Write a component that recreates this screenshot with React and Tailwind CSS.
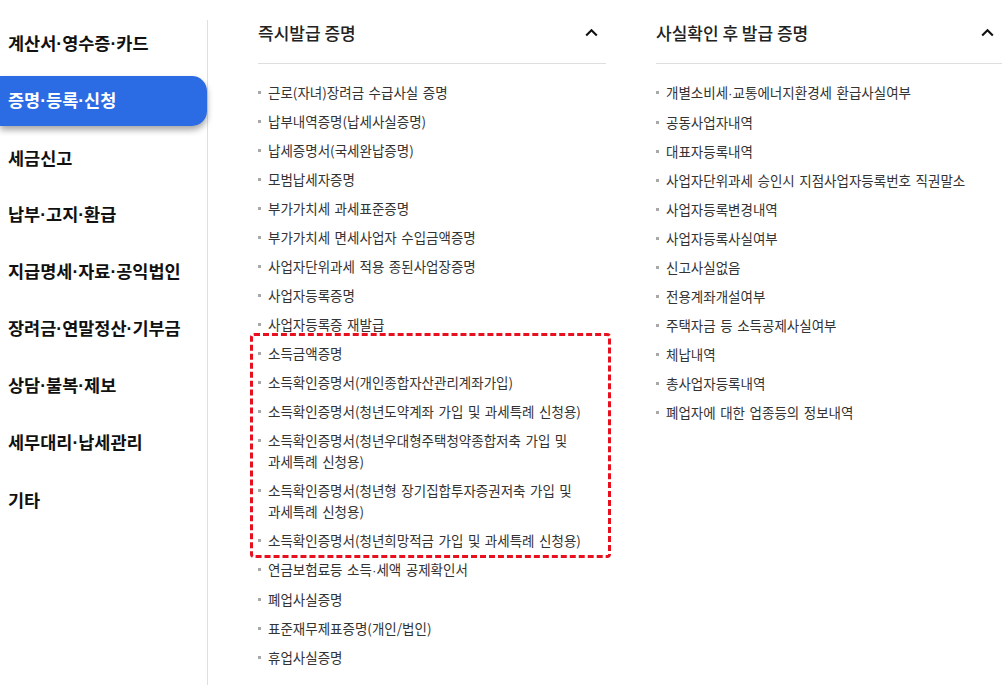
import React from "react";

const menu = [
  "계산서·영수증·카드",
  "증명·등록·신청",
  "세금신고",
  "납부·고지·환급",
  "지급명세·자료·공익법인",
  "장려금·연말정산·기부금",
  "상담·불복·제보",
  "세무대리·납세관리",
  "기타",
];

const instantTop = [
  "근로(자녀)장려금 수급사실 증명",
  "납부내역증명(납세사실증명)",
  "납세증명서(국세완납증명)",
  "모범납세자증명",
  "부가가치세 과세표준증명",
  "부가가치세 면세사업자 수입금액증명",
  "사업자단위과세 적용 종된사업장증명",
  "사업자등록증명",
  "사업자등록증 재발급",
];

// items inside the red dashed highlight
const instantMarked = [
  "소득금액증명",
  "소득확인증명서(개인종합자산관리계좌가입)",
  "소득확인증명서(청년도약계좌 가입 및 과세특례 신청용)",
  "소득확인증명서(청년우대형주택청약종합저축 가입 및 과세특례 신청용)",
  "소득확인증명서(청년형 장기집합투자증권저축 가입 및 과세특례 신청용)",
  "소득확인증명서(청년희망적금 가입 및 과세특례 신청용)",
];

const instantBottom = [
  "연금보험료등 소득·세액 공제확인서",
  "폐업사실증명",
  "표준재무제표증명(개인/법인)",
  "휴업사실증명",
];

const afterCheck = [
  "개별소비세·교통에너지환경세 환급사실여부",
  "공동사업자내역",
  "대표자등록내역",
  "사업자단위과세 승인시 지점사업자등록번호 직권말소",
  "사업자등록변경내역",
  "사업자등록사실여부",
  "신고사실없음",
  "전용계좌개설여부",
  "주택자금 등 소득공제사실여부",
  "체납내역",
  "총사업자등록내역",
  "폐업자에 대한 업종등의 정보내역",
];

// narrow middle dot, the CJK one is too wide
const Dotted = ({ text }) => {
  const parts = text.split("·");
  return parts.map((p, i) => (
    <React.Fragment key={i}>
      {i > 0 && <span className="font-['Liberation_Sans',sans-serif]">·</span>}
      {p}
    </React.Fragment>
  ));
};

const ChevronUp = () => (
  <svg width="13" height="9" viewBox="0 0 13 9" fill="none" className="mr-[8px]">
    <polyline points="1.2,7.5 6.5,2.2 11.8,7.5" stroke="#111" strokeWidth="2.1" />
  </svg>
);

const Item = ({ text }) => (
  <li className="flex gap-[7px] text-[13.5px] leading-[21px] text-[#333] break-keep [word-spacing:1.5px]">
    <span className="w-[3px] h-[3px] bg-[#a8a8a8] mt-[9px] shrink-0"></span>
    <span>
      <Dotted text={text} />
    </span>
  </li>
);

const SectionHeader = ({ title }) => (
  <div className="h-[64px] pt-[2px] flex items-center justify-between border-b border-[#dedede]">
    <h2 className="text-[17px] font-medium text-[#222]">{title}</h2>
    <ChevronUp />
  </div>
);

export default function App() {
  return (
    <div className="flex min-h-screen bg-white font-['Noto_Sans_CJK_KR',sans-serif]">
      {/* Sidebar */}
      <aside className="w-[207px] shrink-0 pt-[19px] flex flex-col">
        <ul className="flex flex-col gap-[7px]">
          {menu.map((m) => (
            <li
              key={m}
              className={
                m === "증명·등록·신청"
                  ? "h-[50px] pl-[8px] flex items-center rounded-r-[15px] bg-[#2b6be4] text-white text-[17.5px] font-bold shadow-[0_4px_6px_rgba(0,0,0,0.35)] relative z-10"
                  : "h-[50px] pl-[8px] flex items-center text-[#111] text-[17.5px] font-bold"
              }
            >
              <span>
                <Dotted text={m} />
              </span>
            </li>
          ))}
        </ul>
      </aside>

      {/* Content */}
      <main className="flex-1 flex gap-[50px] pl-[50px] pr-[4px] mt-[20px] border-l border-[#dcdcf7]">
        <section className="w-[348px] -mt-[20px]">
          <SectionHeader title="즉시발급 증명" />
          <ul className="flex flex-col gap-[8px] mt-[18px]">
            {instantTop.map((t) => (
              <Item key={t} text={t} />
            ))}
            <li className="-ml-[8px] -mr-[5px] -mt-[10px] -mb-[7px] pt-[7px] pb-[4px] pl-[5px] pr-[2px] border-[3px] border-dashed border-[#e8101e] rounded-[4px]">
              <ul className="flex flex-col gap-[8px]">
                {instantMarked.map((t) => (
                  <Item key={t} text={t} />
                ))}
              </ul>
            </li>
            {instantBottom.map((t) => (
              <Item key={t} text={t} />
            ))}
          </ul>
        </section>

        <section className="flex-1 -mt-[20px]">
          <SectionHeader title="사실확인 후 발급 증명" />
          <ul className="flex flex-col gap-[8px] mt-[18px]">
            {afterCheck.map((t) => (
              <Item key={t} text={t} />
            ))}
          </ul>
        </section>
      </main>
    </div>
  );
}
